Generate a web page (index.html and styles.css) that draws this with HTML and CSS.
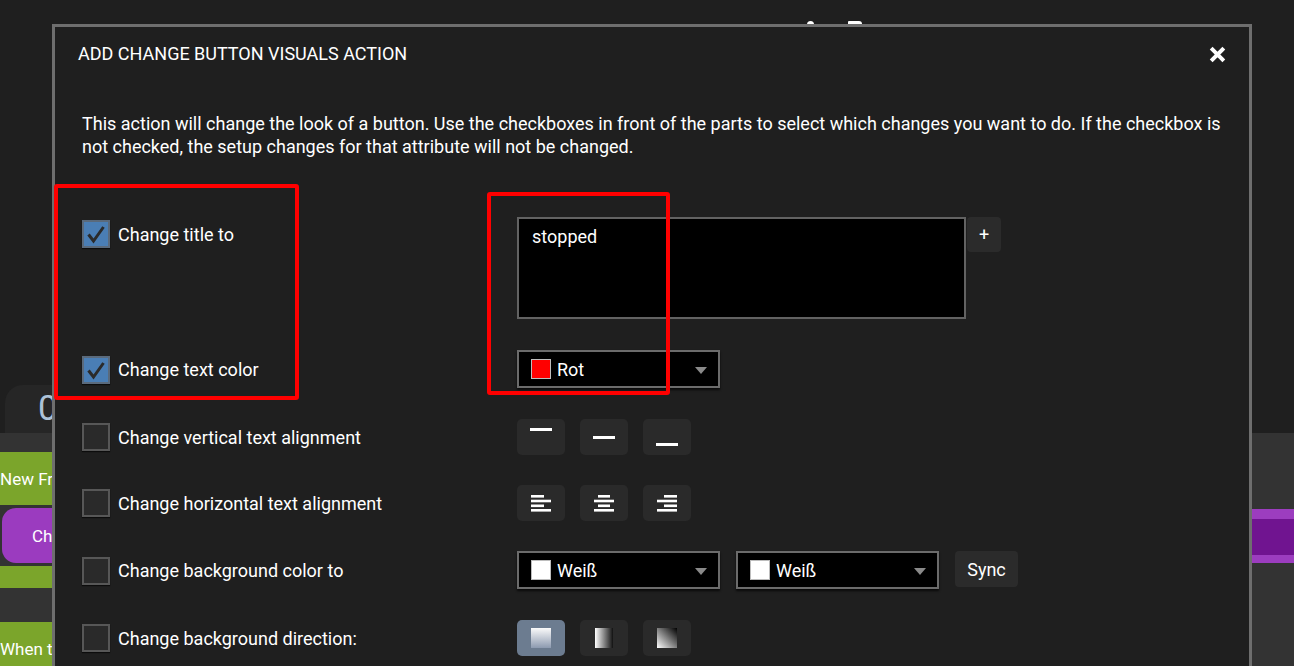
FILE: index.html
```html
<!DOCTYPE html>
<html lang="en">
<head>
<meta charset="utf-8">
<title>Add change button visuals action</title>
<link rel="stylesheet" href="styles.css">
</head>
<body>
<div class="app">
  <div class="topbar">
    <div class="top-icons">
      <span class="ti-user"></span>
      <span class="ti-box"></span>
    </div>
  </div>
  <div class="tile-row">
    <div class="tile">0</div>
  </div>
  <div class="band">
    <div class="lcol">
      <div class="blk green tall">New Fr</div>
      <div class="blk purple">Ch</div>
      <div class="blk green short"></div>
      <div class="spacer"></div>
      <div class="blk green tall">When t</div>
    </div>
    <div class="rcol">
      <div class="pstripe"></div>
    </div>
  </div>
</div>

<div class="modal">
  <div class="modal-header">
    <h4 class="modal-title">ADD CHANGE BUTTON VISUALS ACTION</h4>
    <button class="close" aria-label="Close">
      <svg width="15" height="15" viewBox="0 0 15 15"><path d="M2.6 2.6 L12.4 12.4 M12.4 2.6 L2.6 12.4" stroke="#fff" stroke-width="4" stroke-linecap="square"/></svg>
    </button>
  </div>
  <div class="modal-body">
    <p class="desc">This action will change the look of a button. Use the checkboxes in front of the parts to select which changes you want to do. If the checkbox is<br>not checked, the setup changes for that attribute will not be changed.</p>

    <div class="rows">
      <div class="row top">
        <label class="opt">
          <span class="cb checked"><svg width="28" height="28" viewBox="0 0 28 28"><path d="M6.5 14.5 L11.5 21 L21.5 7" fill="none" stroke="#2b2b2b" stroke-width="3"/></svg></span>
          <span class="lbl">Change title to</span>
        </label>
        <div class="ctrl ta-wrap">
          <textarea class="ta">stopped</textarea>
          <button class="plus">+</button>
        </div>
      </div>

      <div class="row">
        <label class="opt">
          <span class="cb checked"><svg width="28" height="28" viewBox="0 0 28 28"><path d="M6.5 14.5 L11.5 21 L21.5 7" fill="none" stroke="#2b2b2b" stroke-width="3"/></svg></span>
          <span class="lbl">Change text color</span>
        </label>
        <div class="ctrl sel-wrap">
          <div class="select"><span class="swatch red"></span><span>Rot</span><span class="caret"></span></div>
        </div>
      </div>

      <div class="row">
        <label class="opt">
          <span class="cb"></span>
          <span class="lbl">Change vertical text alignment</span>
        </label>
        <div class="ctrl btns">
          <button class="abtn v-top"><span class="vbar"></span></button>
          <button class="abtn v-mid"><span class="vbar"></span></button>
          <button class="abtn v-bot"><span class="vbar"></span></button>
        </div>
      </div>

      <div class="row">
        <label class="opt">
          <span class="cb"></span>
          <span class="lbl">Change horizontal text alignment</span>
        </label>
        <div class="ctrl btns">
          <button class="abtn"><svg width="20" height="17" viewBox="0 0 20 17"><rect x="0" y="0" width="13" height="2.6" fill="#fff"/><rect x="0" y="4.7" width="20" height="2.6" fill="#fff"/><rect x="0" y="9.5" width="13" height="2.6" fill="#fff"/><rect x="0" y="14" width="20" height="2.6" fill="#fff"/></svg></button>
          <button class="abtn"><svg width="20" height="17" viewBox="0 0 20 17"><rect x="4" y="0" width="12" height="2.6" fill="#fff"/><rect x="0" y="4.7" width="20" height="2.6" fill="#fff"/><rect x="4" y="9.5" width="12" height="2.6" fill="#fff"/><rect x="0" y="14" width="20" height="2.6" fill="#fff"/></svg></button>
          <button class="abtn"><svg width="20" height="17" viewBox="0 0 20 17"><rect x="7" y="0" width="13" height="2.6" fill="#fff"/><rect x="0" y="4.7" width="20" height="2.6" fill="#fff"/><rect x="7" y="9.5" width="13" height="2.6" fill="#fff"/><rect x="0" y="14" width="20" height="2.6" fill="#fff"/></svg></button>
        </div>
      </div>

      <div class="row">
        <label class="opt">
          <span class="cb"></span>
          <span class="lbl">Change background color to</span>
        </label>
        <div class="ctrl sel-wrap">
          <div class="select"><span class="swatch white"></span><span>Weiß</span><span class="caret"></span></div>
          <div class="select"><span class="swatch white"></span><span>Weiß</span><span class="caret"></span></div>
          <button class="sync">Sync</button>
        </div>
      </div>

      <div class="row">
        <label class="opt">
          <span class="cb"></span>
          <span class="lbl">Change background direction:</span>
        </label>
        <div class="ctrl btns dir">
          <button class="abtn active"><span class="g g1"></span></button>
          <button class="abtn"><span class="g g2"></span></button>
          <button class="abtn"><span class="g g3"></span></button>
        </div>
      </div>
    </div>
  </div>
</div>

<div class="mark m1"></div>
<div class="mark m2"></div>
</body>
</html>
```

FILE: styles.css
```css
* { box-sizing: border-box; }

html, body {
  margin: 0;
  padding: 0;
}

body {
  position: relative;
  width: 1294px;
  height: 666px;
  overflow: hidden;
  background: #1f1f1f;
  color: #fff;
  font-family: Roboto, "Noto Sans", "Liberation Sans", sans-serif;
}

/* ---------- background application ---------- */
.app {
  display: flex;
  flex-direction: column;
  height: 666px;
}

.topbar {
  flex: none;
  height: 385px;
}

.top-icons {
  display: flex;
  align-items: flex-start;
  gap: 34px;
  padding: 21px 0 0 807px;
}

.ti-user {
  width: 7px;
  height: 10px;
  background: #fff;
  border-radius: 4px 4px 0 0;
}

.ti-box {
  width: 14px;
  height: 10px;
  background: #fff;
  border-radius: 1px 3px 0 0;
}

.tile-row {
  flex: none;
  height: 48px;
  display: flex;
}

.tile {
  margin-left: 5px;
  width: 420px;
  background: #262626;
  border-top-left-radius: 18px;
  padding-left: 33px;
  font-size: 35px;
  line-height: 48px;
  color: #adc2d8;
}

.band {
  flex: 1;
  display: flex;
  background: #333333;
}

.lcol {
  width: 220px;
  display: flex;
  flex-direction: column;
  padding-top: 19px;
}

.blk {
  display: flex;
  align-items: center;
  color: #fff;
  font-size: 17px;
  white-space: nowrap;
  overflow: hidden;
}

.green { background: #7ba52b; }
.green.tall { height: 53px; }
.green.short { height: 22px; }

.purple {
  height: 55px;
  margin: 3px 0 3px 2px;
  padding-left: 30px;
  background: #9b3bbf;
  border-radius: 14px;
}

.spacer { height: 34px; }

.rcol {
  flex: 1;
  display: flex;
  justify-content: flex-end;
  padding-top: 76px;
}

.pstripe {
  width: 420px;
  height: 54px;
  background: #701490;
  border-top: 10px solid #9c3dbf;
  border-bottom: 8px solid #9c3dbf;
}

/* ---------- modal ---------- */
.modal {
  position: absolute;
  left: 52px;
  top: 24px;
  width: 1200px;
  height: 720px;
  border: 3px solid #6e6e6e;
  background: #1f1f1f;
}

.modal-header {
  display: flex;
  align-items: center;
  justify-content: space-between;
  padding: 14px 24px 16px 23px;
}

.modal-title {
  margin: 0;
  font-size: 18px;
  font-weight: 400;
  line-height: 26px;
  color: #fff;
}

.close {
  display: flex;
  width: 15px;
  height: 15px;
  padding: 0;
  border: 0;
  background: none;
}

.close svg { overflow: visible; }

.modal-body {
  padding: 29px 15px 0 27px;
}

.desc {
  margin: 0;
  font-size: 18px;
  line-height: 23px;
  color: #fff;
  white-space: nowrap;
}

.rows {
  margin-top: 59px;
  display: flex;
  flex-direction: column;
  gap: 30px;
}

.row {
  display: flex;
  align-items: center;
}

.row.top { align-items: flex-start; }

.opt {
  flex: none;
  width: 435px;
  display: flex;
  align-items: center;
  gap: 8px;
  font-size: 18px;
  color: #fff;
}

.row.top .opt { padding-top: 3px; }

.cb {
  flex: none;
  width: 28px;
  height: 28px;
  border: 2px solid #575757;
  background: #2a2a2a;
  box-shadow: 0 1px 1px rgba(0, 0, 0, 0.6);
  position: relative;
}

.cb.checked {
  background: #4a7eb5;
  border-color: #5a6a7c;
}

.cb svg {
  position: absolute;
  left: -2px;
  top: -2px;
}

.ctrl {
  display: flex;
  align-items: flex-start;
}

.ta-wrap { padding-bottom: 1px; }
.sel-wrap { padding-bottom: 1px; gap: 16px; }

.ta {
  display: block;
  width: 449px;
  height: 102px;
  margin: 0;
  padding: 5px 13px;
  border: 2px solid #626262;
  border-radius: 0;
  background: #000;
  color: #fff;
  font-family: Roboto, "Noto Sans", "Liberation Sans", sans-serif;
  font-size: 18px;
  line-height: 1.42857;
  resize: none;
  outline: none;
}

.plus {
  width: 34px;
  height: 35px;
  margin-left: 1px;
  padding: 0;
  border: 0;
  border-radius: 4px;
  background: #2b2b2b;
  color: #fff;
  font-family: inherit;
  font-size: 18px;
  line-height: 33px;
}

.select {
  width: 203px;
  height: 38px;
  display: flex;
  align-items: center;
  gap: 6px;
  padding: 0 11px 0 12px;
  border: 2px solid #6b6b6b;
  background: #000;
  box-shadow: 0 2px 2px rgba(0, 0, 0, 0.7);
  font-size: 18px;
  color: #fff;
}

.swatch {
  width: 20px;
  height: 20px;
  border: 1px solid #bdbdbd;
}

.swatch.red { background: #ff0000; }
.swatch.white { background: #ffffff; }

.caret {
  margin-left: auto;
  margin-top: 2px;
  width: 0;
  height: 0;
  border-left: 6px solid transparent;
  border-right: 6px solid transparent;
  border-top: 7px solid #8a8a8a;
}

.sync {
  width: 63px;
  height: 36px;
  padding: 0;
  border: 0;
  border-radius: 4px;
  background: #2b2b2b;
  color: #fff;
  font-family: inherit;
  font-size: 18px;
}

.btns { gap: 15px; }

.abtn {
  width: 48px;
  height: 36px;
  padding: 0;
  border: 0;
  border-radius: 5px;
  background: #2a2a2a;
  display: flex;
  align-items: center;
  justify-content: center;
}

.v-top, .v-mid, .v-bot { padding: 9px 0; }
.v-top { align-items: flex-start; }
.v-bot { align-items: flex-end; }

.vbar {
  width: 22px;
  height: 3px;
  background: #fff;
}

.abtn.active { background: #6c7c90; }

.g { display: block; width: 20px; height: 20px; }
.g1 { background: linear-gradient(to bottom, #fafafa, #8c9ab0); }
.g2 { width: 18px; background: linear-gradient(to right, #ffffff, #111111); }
.g3 { background: linear-gradient(to top right, #ffffff, #000000); }

/* ---------- annotation frames ---------- */
.mark {
  position: absolute;
  border: 4px solid #ff0000;
  border-radius: 3px;
}

.m1 { left: 54px; top: 184px; width: 245px; height: 216px; }
.m2 { left: 487px; top: 192px; width: 183px; height: 203px; }
```
